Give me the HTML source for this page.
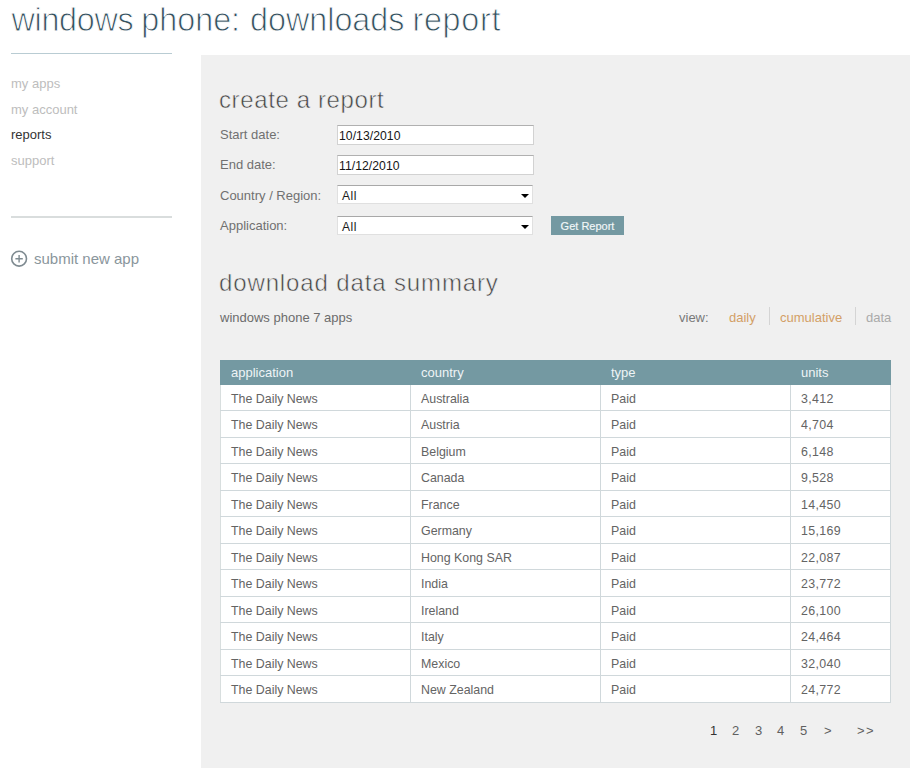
<!DOCTYPE html>
<html><head><meta charset="utf-8">
<style>
*{margin:0;padding:0;box-sizing:border-box}
html,body{width:913px;height:768px;overflow:hidden;background:#fff}
body{font-family:"Liberation Sans",sans-serif;position:relative}
.abs{position:absolute;white-space:nowrap}
#title{left:12px;top:0px;font-size:32.3px;color:#34505e;line-height:40px;-webkit-text-stroke:0.9px #fff}
.hr{position:absolute;height:1px;background:#b9ccd3}
.nav{position:absolute;left:11px;font-size:13px;line-height:16px;color:#bdbdbd}
#panel{position:absolute;left:201px;top:55px;width:709px;height:713px;background:#f0f0f0}
.h2{position:absolute;left:219px;font-size:24px;color:#444;line-height:30px;-webkit-text-stroke:0.55px #f0f0f0}
.lbl{position:absolute;left:220px;font-size:13px;color:#707070;line-height:16px}
.inp{position:absolute;left:337px;width:197px;height:20px;background:#fff;border:1px solid #d2d2d2;border-top-color:#b0b0b0}
.inp span{position:absolute;left:1px;top:3px;font-size:12.2px;letter-spacing:0.05px;color:#151515;line-height:14px}
.sel{position:absolute;left:337px;width:196px;height:19px;background:#fff;border:1px solid #e0e0e0;border-top-color:#a8a8a8}
.sel span{position:absolute;left:4px;top:3px;letter-spacing:0.5px;font-size:12px;color:#1a1a1a;line-height:14px}
.arr{position:absolute;right:3px;top:8px;width:0;height:0;border-left:4px solid transparent;border-right:4px solid transparent;border-top:4.5px solid #000}
#btn{position:absolute;left:551px;top:216px;width:73px;height:19px;background:#7499a2;color:#f2f7f8;font-size:11px;line-height:21px;text-align:center;-webkit-text-stroke:0.15px #f2f7f8}
.th{position:absolute;top:365px;font-size:13px;line-height:16px;color:#eef4f6;white-space:nowrap}
.td{position:absolute;font-size:12.4px;line-height:16px;color:#646464;white-space:nowrap}
.vl{position:absolute;top:385px;width:1px;height:318px;background:#d0d8db}
.hl{position:absolute;left:220px;width:671px;height:1px;background:#d0d8db}
.pg{position:absolute;top:723px;font-size:13px;color:#606060;line-height:16px}
</style></head><body>
<div id="title" class="abs"><span style="position:absolute;left:-0.5px;letter-spacing:-0.3px">windows</span><span style="position:absolute;left:129.3px">phone:</span><span style="position:absolute;left:238px">downloads</span><span style="position:absolute;left:400.5px;letter-spacing:0.7px">report</span></div>
<div class="hr" style="left:11px;top:53px;width:161px"></div>
<div class="nav" style="top:76px">my apps</div>
<div class="nav" style="top:102px">my account</div>
<div class="nav" style="top:127px;color:#333">reports</div>
<div class="nav" style="top:153px">support</div>
<div class="hr" style="left:11px;top:216px;width:161px;height:2px;background:#d9dddd"></div>
<svg class="abs" style="left:10px;top:249px" width="19" height="19" viewBox="0 0 19 19"><circle cx="9.1" cy="9.7" r="7.4" fill="none" stroke="#7f8b91" stroke-width="1.6"/><path d="M9.1 6v7.4M5.4 9.7h7.4" stroke="#7f8b91" stroke-width="1.4"/></svg>
<div class="abs" style="left:34px;top:250px;font-size:15px;color:#8a969c;line-height:18px">submit new app</div>

<div id="panel"></div>
<div class="h2" style="top:85px;letter-spacing:0.62px">create a report</div>
<div class="lbl" style="top:127px">Start date:</div>
<div class="lbl" style="top:157px">End date:</div>
<div class="lbl" style="top:188px">Country / Region:</div>
<div class="lbl" style="top:218px">Application:</div>
<div class="inp" style="top:125px"><span>10/13/2010</span></div>
<div class="inp" style="top:155px"><span>11/12/2010</span></div>
<div class="sel" style="top:185px"><span>All</span><i class="arr"></i></div>
<div class="sel" style="top:216px"><span>All</span><i class="arr"></i></div>
<div id="btn">Get Report</div>

<div class="h2" style="top:268px;letter-spacing:0.87px">download data summary</div>
<div class="lbl" style="top:310px;color:#6c6c6c">windows phone 7 apps</div>
<div class="abs" style="left:679px;top:310px;font-size:13px;line-height:16px;color:#787878">view:</div>
<div class="abs" style="left:729px;top:310px;font-size:13px;line-height:16px;color:#d39f66">daily</div>
<div class="abs" style="left:769px;top:307px;width:1px;height:18px;background:#d4d4d4"></div>
<div class="abs" style="left:780px;top:310px;font-size:13px;line-height:16px;color:#d39f66">cumulative</div>
<div class="abs" style="left:855px;top:307px;width:1px;height:18px;background:#d4d4d4"></div>
<div class="abs" style="left:866px;top:310px;font-size:13px;line-height:16px;color:#aaa">data</div>

<div id="tbody" style="position:absolute;left:220px;top:385px;width:671px;height:318px;background:#fff"></div>
<div id="thead" style="position:absolute;left:220px;top:360px;width:671px;height:25px;background:#7499a2"></div>
<div class="th" style="left:231px">application</div>
<div class="th" style="left:421px">country</div>
<div class="th" style="left:611px">type</div>
<div class="th" style="left:801px">units</div>
<div class="vl" style="left:220px;background:#d8dede"></div>
<div class="vl" style="left:410px"></div>
<div class="vl" style="left:600px"></div>
<div class="vl" style="left:790px"></div>
<div class="vl" style="left:890px"></div>
<div class="hl" style="top:410px"></div>
<div class="hl" style="top:437px"></div>
<div class="hl" style="top:463px"></div>
<div class="hl" style="top:490px"></div>
<div class="hl" style="top:516px"></div>
<div class="hl" style="top:543px"></div>
<div class="hl" style="top:569px"></div>
<div class="hl" style="top:596px"></div>
<div class="hl" style="top:622px"></div>
<div class="hl" style="top:649px"></div>
<div class="hl" style="top:675px"></div>
<div class="hl" style="top:702px"></div>
<div class="td" style="left:231px;top:391px">The Daily News</div>
<div class="td" style="left:421px;top:391px">Australia</div>
<div class="td" style="left:611px;top:391px">Paid</div>
<div class="td" style="left:801px;letter-spacing:0.35px;top:391px">3,412</div>
<div class="td" style="left:231px;top:417px">The Daily News</div>
<div class="td" style="left:421px;top:417px">Austria</div>
<div class="td" style="left:611px;top:417px">Paid</div>
<div class="td" style="left:801px;letter-spacing:0.35px;top:417px">4,704</div>
<div class="td" style="left:231px;top:444px">The Daily News</div>
<div class="td" style="left:421px;top:444px">Belgium</div>
<div class="td" style="left:611px;top:444px">Paid</div>
<div class="td" style="left:801px;letter-spacing:0.35px;top:444px">6,148</div>
<div class="td" style="left:231px;top:470px">The Daily News</div>
<div class="td" style="left:421px;top:470px">Canada</div>
<div class="td" style="left:611px;top:470px">Paid</div>
<div class="td" style="left:801px;letter-spacing:0.35px;top:470px">9,528</div>
<div class="td" style="left:231px;top:497px">The Daily News</div>
<div class="td" style="left:421px;top:497px">France</div>
<div class="td" style="left:611px;top:497px">Paid</div>
<div class="td" style="left:801px;letter-spacing:0.35px;top:497px">14,450</div>
<div class="td" style="left:231px;top:523px">The Daily News</div>
<div class="td" style="left:421px;top:523px">Germany</div>
<div class="td" style="left:611px;top:523px">Paid</div>
<div class="td" style="left:801px;letter-spacing:0.35px;top:523px">15,169</div>
<div class="td" style="left:231px;top:550px">The Daily News</div>
<div class="td" style="left:421px;top:550px">Hong Kong SAR</div>
<div class="td" style="left:611px;top:550px">Paid</div>
<div class="td" style="left:801px;letter-spacing:0.35px;top:550px">22,087</div>
<div class="td" style="left:231px;top:576px">The Daily News</div>
<div class="td" style="left:421px;top:576px">India</div>
<div class="td" style="left:611px;top:576px">Paid</div>
<div class="td" style="left:801px;letter-spacing:0.35px;top:576px">23,772</div>
<div class="td" style="left:231px;top:603px">The Daily News</div>
<div class="td" style="left:421px;top:603px">Ireland</div>
<div class="td" style="left:611px;top:603px">Paid</div>
<div class="td" style="left:801px;letter-spacing:0.35px;top:603px">26,100</div>
<div class="td" style="left:231px;top:629px">The Daily News</div>
<div class="td" style="left:421px;top:629px">Italy</div>
<div class="td" style="left:611px;top:629px">Paid</div>
<div class="td" style="left:801px;letter-spacing:0.35px;top:629px">24,464</div>
<div class="td" style="left:231px;top:656px">The Daily News</div>
<div class="td" style="left:421px;top:656px">Mexico</div>
<div class="td" style="left:611px;top:656px">Paid</div>
<div class="td" style="left:801px;letter-spacing:0.35px;top:656px">32,040</div>
<div class="td" style="left:231px;top:682px">The Daily News</div>
<div class="td" style="left:421px;top:682px">New Zealand</div>
<div class="td" style="left:611px;top:682px">Paid</div>
<div class="td" style="left:801px;letter-spacing:0.35px;top:682px">24,772</div>

<div class="pg" style="left:710px;color:#333">1</div>
<div class="pg" style="left:732px">2</div>
<div class="pg" style="left:755px">3</div>
<div class="pg" style="left:777px">4</div>
<div class="pg" style="left:800px">5</div>
<div class="pg" style="left:824px">&gt;</div>
<div class="pg" style="left:857px;letter-spacing:1.5px">&gt;&gt;</div>
</body></html>
